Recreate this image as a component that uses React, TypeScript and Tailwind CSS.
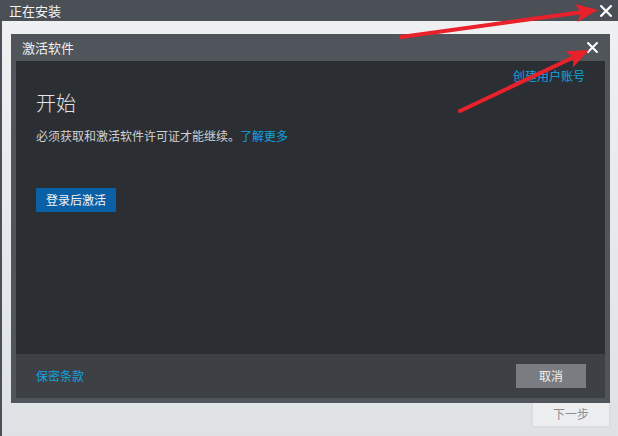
import React from "react";

const font = { fontFamily: '"Noto Sans CJK SC", "Noto Sans", sans-serif' };

function CloseIcon({ size }: { size: number }) {
  return (
    <svg width={size} height={size} viewBox="0 0 10 10" className="block">
      <path d="M1 1 L9 9 M9 1 L1 9" stroke="#ffffff" strokeWidth="1.9" strokeLinecap="square" />
    </svg>
  );
}

// red callout arrows drawn on top of the window
function Arrows() {
  const arrow = (x1: number, y1: number, x2: number, y2: number) => {
    const dx = x2 - x1;
    const dy = y2 - y1;
    const len = Math.hypot(dx, dy);
    const ux = dx / len;
    const uy = dy / len;
    const headLen = 22;
    const headW = 9;
    const bx = x2 - ux * headLen;
    const by = y2 - uy * headLen;
    const nx = -uy;
    const ny = ux;
    const notchX = x2 - ux * (headLen - 5);
    const notchY = y2 - uy * (headLen - 5);
    return (
      <g>
        <line x1={x1} y1={y1} x2={notchX} y2={notchY} stroke="#e8212b" strokeWidth="4" strokeLinecap="round" />
        <polygon
          points={`${x2},${y2} ${bx + nx * headW},${by + ny * headW} ${notchX},${notchY} ${bx - nx * headW},${by - ny * headW}`}
          fill="#e8212b"
        />
      </g>
    );
  };
  return (
    <svg className="absolute inset-0 pointer-events-none" width={618} height={436}>
      {arrow(401, 37, 598, 10)}
      {arrow(460, 111, 589, 50)}
    </svg>
  );
}

export default function App() {
  return (
    <div className="relative w-[618px] h-[436px] overflow-hidden flex flex-col bg-[#4b4f56]" style={font}>
      <div className="h-[21px] flex items-center justify-between pl-[9px] pr-[6px] text-[13px] text-[#f4f4f4]">
        <span className="leading-none">正在安装</span>
        <CloseIcon size={12} />
      </div>

      <div className="relative flex-1 ml-[2px] bg-gradient-to-b from-[#eef0f2] to-[#dfe2e5] flex flex-col justify-end items-end pr-[7px] pb-[8px]">
        <div className="w-[80px] h-[28px] border-2 border-[#d9dce0] bg-[#eceef0] flex items-center justify-center text-[12px] text-[#8a8d91]">
          下一步
        </div>

        <div className="absolute left-[9px] top-[13px] w-[599px] h-[369px] bg-[#50545b] flex flex-col px-[5px] pb-[5px]">
          <div className="h-[27px] flex items-center justify-between pl-[6px] pr-[7px] text-[13px] text-[#f0f0f0]">
            <span className="leading-none">激活软件</span>
            <CloseIcon size={11} />
          </div>

          <div className="flex-1 bg-[#2b2f33] flex flex-col px-[20px] pt-[8px]">
            <div className="flex justify-end">
              <span className="text-[12px] leading-[14px] text-[#12a3e2]">创建用户账号</span>
            </div>
            <div className="mt-[6px] text-[20px] leading-[28px] text-[#e4e5e6] font-light">开始</div>
            <div className="mt-[11px] text-[12px] leading-[16px] text-[#cfd1d3]">
              必须获取和激活软件许可证才能继续。<span className="text-[#12a3e2]">了解更多</span>
            </div>
            <div className="mt-[42px]">
              <div className="inline-flex w-[80px] h-[24px] items-center justify-center bg-[#0b5fa4] text-[12px] text-[#f2f4f6]">
                登录后激活
              </div>
            </div>
          </div>

          <div className="h-[44px] bg-[#3d4145] flex items-center justify-between pl-[20px] pr-[19px]">
            <span className="text-[12px] text-[#12a3e2]">保密条款</span>
            <div className="w-[70px] h-[24px] bg-[#797c80] flex items-center justify-center text-[12px] text-[#f2f2f2]">
              取消
            </div>
          </div>
        </div>
      </div>

      <Arrows />
    </div>
  );
}
